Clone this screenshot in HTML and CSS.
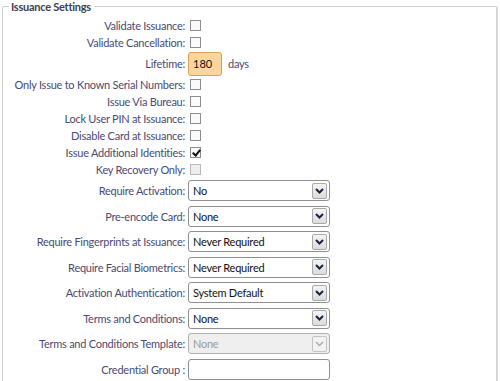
FILE: index.html
```html
<!DOCTYPE html>
<html lang="en">
  <head>
    <meta charset="UTF-8" />
    <title>Issuance Settings</title>
    <link rel="stylesheet" href="styles.css">
  </head>
  <body>
    <fieldset class="settings">
      <legend>Issuance Settings</legend>

      <div class="row check-row">
        <label>Validate Issuance:</label>
        <input type="checkbox" class="check" />
      </div>
      <div class="row check-row">
        <label>Validate Cancellation:</label>
        <input type="checkbox" class="check" />
      </div>
      <div class="row lifetime-row">
        <label>Lifetime:</label>
        <div class="inline">
          <input type="text" class="lifetime" value="180" />
          <span class="unit">days</span>
        </div>
      </div>
      <div class="row check-row">
        <label>Only Issue to Known Serial Numbers:</label>
        <input type="checkbox" class="check" />
      </div>
      <div class="row check-row">
        <label>Issue Via Bureau:</label>
        <input type="checkbox" class="check" />
      </div>
      <div class="row check-row">
        <label>Lock User PIN at Issuance:</label>
        <input type="checkbox" class="check" />
      </div>
      <div class="row check-row">
        <label>Disable Card at Issuance:</label>
        <input type="checkbox" class="check" />
      </div>
      <div class="row check-row">
        <label>Issue Additional Identities:</label>
        <input type="checkbox" class="check" checked />
      </div>
      <div class="row check-row">
        <label>Key Recovery Only:</label>
        <input type="checkbox" class="check" disabled />
      </div>

      <div class="row select-row">
        <label>Require Activation:</label>
        <div class="select"><span class="value">No</span><span class="arrow"><svg width="9" height="6" viewBox="0 0 9 6"><path d="M1 1l3.5 3.5L8 1" fill="none" stroke="#1c2340" stroke-width="2"/></svg></span></div>
      </div>
      <div class="row select-row">
        <label>Pre-encode Card:</label>
        <div class="select"><span class="value">None</span><span class="arrow"><svg width="9" height="6" viewBox="0 0 9 6"><path d="M1 1l3.5 3.5L8 1" fill="none" stroke="#1c2340" stroke-width="2"/></svg></span></div>
      </div>
      <div class="row select-row">
        <label>Require Fingerprints at Issuance:</label>
        <div class="select"><span class="value">Never Required</span><span class="arrow"><svg width="9" height="6" viewBox="0 0 9 6"><path d="M1 1l3.5 3.5L8 1" fill="none" stroke="#1c2340" stroke-width="2"/></svg></span></div>
      </div>
      <div class="row select-row">
        <label>Require Facial Biometrics:</label>
        <div class="select"><span class="value">Never Required</span><span class="arrow"><svg width="9" height="6" viewBox="0 0 9 6"><path d="M1 1l3.5 3.5L8 1" fill="none" stroke="#1c2340" stroke-width="2"/></svg></span></div>
      </div>
      <div class="row select-row">
        <label>Activation Authentication:</label>
        <div class="select"><span class="value">System Default</span><span class="arrow"><svg width="9" height="6" viewBox="0 0 9 6"><path d="M1 1l3.5 3.5L8 1" fill="none" stroke="#1c2340" stroke-width="2"/></svg></span></div>
      </div>
      <div class="row select-row">
        <label>Terms and Conditions:</label>
        <div class="select"><span class="value">None</span><span class="arrow"><svg width="9" height="6" viewBox="0 0 9 6"><path d="M1 1l3.5 3.5L8 1" fill="none" stroke="#1c2340" stroke-width="2"/></svg></span></div>
      </div>
      <div class="row select-row">
        <label>Terms and Conditions Template:</label>
        <div class="select disabled"><span class="value">None</span><span class="arrow"><svg width="9" height="6" viewBox="0 0 9 6"><path d="M1 1l3.5 3.5L8 1" fill="none" stroke="#a8acb4" stroke-width="1.5"/></svg></span></div>
      </div>
      <div class="row select-row">
        <label>Credential Group :</label>
        <input type="text" class="text-box" />
      </div>
    </fieldset>
  </body>
</html>
```

FILE: styles.css
```css
body {
  margin: 0;
  font-family: Lato, "Open Sans", sans-serif;
  font-size: 11px;
  letter-spacing: -0.25px;
  color: #4a4a70;
  background: #fff;
  overflow: hidden;
}
.settings {
  margin: 0 2px;
  padding: 4px 0 0 0;
  border: 1px solid #cfcfcf;
  border-right: 2px solid #d6d6d6;
  border-radius: 2px;
  height: 390px;
}
legend {
  margin-left: 6px;
  padding: 0 3px 0 2px;
  font-size: 11px;
  font-weight: bold;
  color: #404050;
}
.row {
  display: grid;
  grid-template-columns: 182px 1fr;
  column-gap: 3px;
  align-items: center;
}
.row label {
  text-align: right;
  white-space: nowrap;
}
.check-row {
  height: 17px;
}
.lifetime-row {
  height: 25px;
}
.select-row {
  height: 25.5px;
}
.check {
  appearance: none;
  -webkit-appearance: none;
  width: 11px;
  height: 11px;
  margin: 0 0 0 2px;
  border: 1px solid #8e8e8e;
  background: #fafafa;
  position: relative;
}
.check:checked::after {
  content: "";
  position: absolute;
  left: 3px;
  top: 0px;
  width: 3px;
  height: 6px;
  border: solid #111;
  border-width: 0 2px 2px 0;
  transform: rotate(40deg);
}
.check:disabled {
  border-color: #b8b8b8;
  background: #eeeeee;
}
.inline {
  display: flex;
  align-items: center;
  gap: 6px;
}
.lifetime {
  width: 34px;
  height: 24px;
  box-sizing: border-box;
  padding: 0 4px;
  border: 1px solid #d9a15a;
  border-radius: 3px;
  background: #fcd59d;
  font: inherit;
  color: #111;
}
.unit {
  color: #4a4a70;
}
.select {
  display: flex;
  align-items: center;
  width: 142px;
  height: 21px;
  box-sizing: border-box;
  padding: 0 2px 0 4px;
  border: 1px solid #8f8f8f;
  border-radius: 3px;
  background: #fff;
  color: #111;
}
.select .value {
  flex: 1;
}
.select .arrow {
  display: flex;
  align-items: center;
  justify-content: center;
  width: 13px;
  height: 14px;
  border: 1px solid #a9a9a9;
  border-radius: 2px;
  background: linear-gradient(#f4f4f4, #dcdcdc);
}
.select.disabled {
  background: #efefef;
  border-color: #b0b0b0;
  color: #9a9a9a;
}
.select.disabled .arrow {
  border-color: #c4c4c4;
  background: #f2f2f2;
}
.text-box {
  width: 142px;
  height: 21px;
  box-sizing: border-box;
  border: 1px solid #8f8f8f;
  border-radius: 3px;
  background: #fff;
  font: inherit;
}
```
